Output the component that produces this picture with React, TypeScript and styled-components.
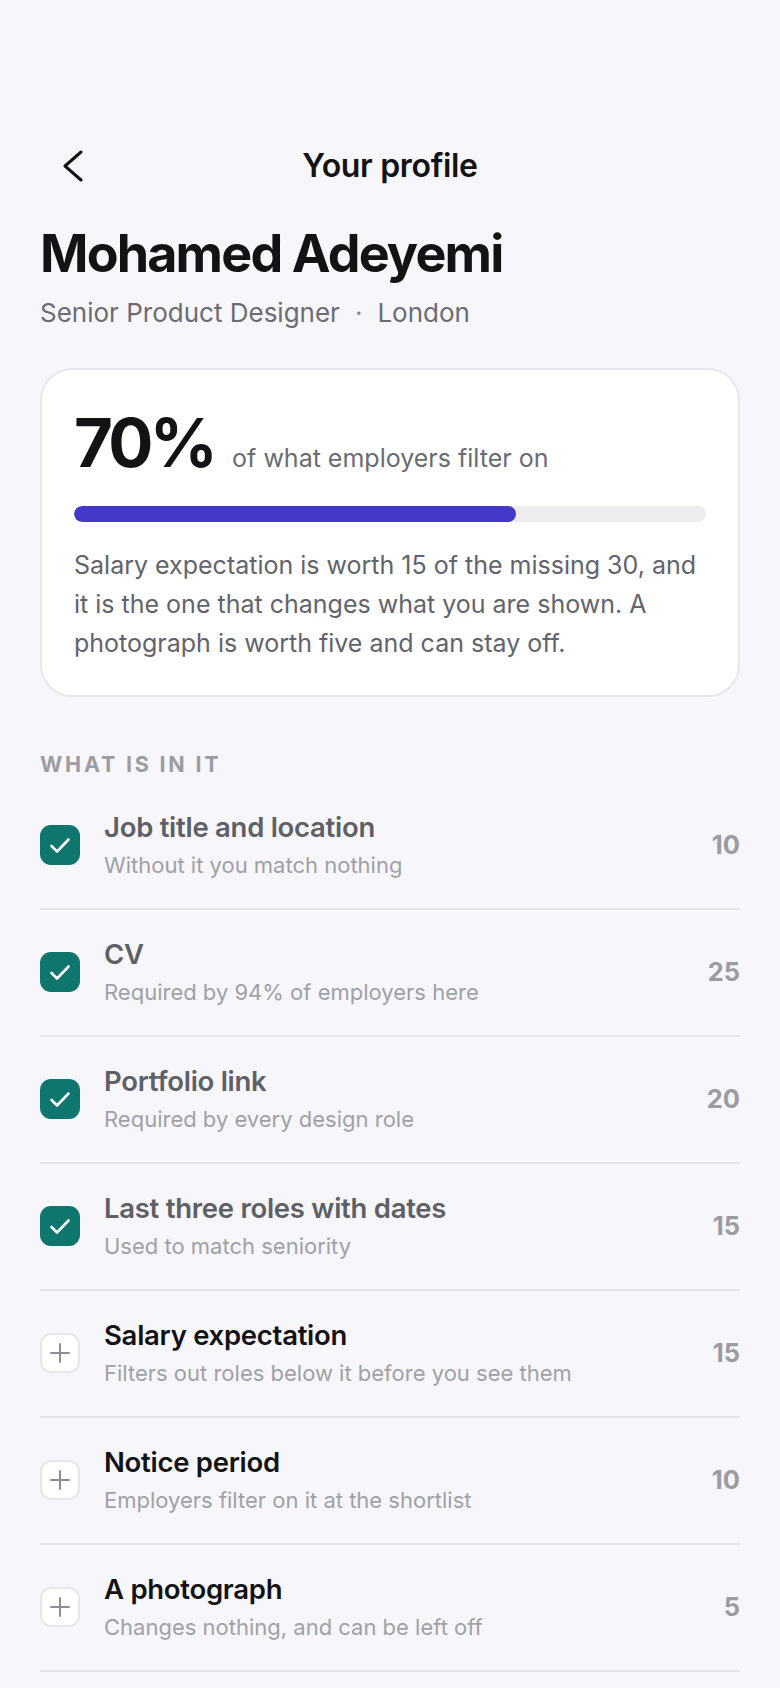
import React from "react";
import styled, { createGlobalStyle } from "styled-components";

const GlobalStyle = createGlobalStyle`
  html, body {
    margin: 0;
    padding: 0;
    background: #f7f7fb;
  }
  body {
    font-family: Inter, "Noto Sans", "Liberation Sans", sans-serif;
    color: #131316;
    -webkit-font-smoothing: antialiased;
  }
  * { box-sizing: border-box; }
`;

const Page = styled.main`
  width: 780px;
  min-height: 1688px;
  padding: 122px 40px 0;
  background: #f7f7fb;
`;

const Header = styled.header`
  position: relative;
  height: 88px;
  display: flex;
  align-items: center;
  justify-content: center;
`;

const BackButton = styled.button`
  position: absolute;
  left: 14px;
  top: 50%;
  transform: translateY(-50%);
  width: 40px;
  height: 44px;
  border: 0;
  padding: 0;
  background: transparent;
  display: flex;
  align-items: center;
  justify-content: center;
  cursor: pointer;
`;

const HeaderTitle = styled.h1`
  margin: 0;
  font-size: 32px;
  line-height: 40px;
  font-weight: 600;
  letter-spacing: -0.01em;
  color: #131316;
`;

const Name = styled.h2`
  margin: 13px 0 0;
  font-size: 52px;
  line-height: 62px;
  font-weight: 700;
  letter-spacing: -0.035em;
  color: #131316;
`;

const Meta = styled.p`
  margin: 8px 0 0;
  font-size: 26px;
  line-height: 39px;
  color: #6b6b73;
  display: flex;
  align-items: center;
  gap: 15px;
`;

const Dot = styled.span`
  color: #8a8a92;
`;

const Card = styled.section`
  margin-top: 36px;
  background: #ffffff;
  border: 2px solid #e7e7ec;
  border-radius: 32px;
  padding: 32px;
`;

const ScoreRow = styled.div`
  display: flex;
  align-items: baseline;
  gap: 18px;
`;

const Score = styled.span`
  font-size: 67px;
  line-height: 82px;
  font-weight: 700;
  letter-spacing: -0.055em;
  color: #131316;
`;

const ScoreCaption = styled.span`
  font-size: 25px;
  line-height: 34px;
  color: #6b6b73;
`;

const Track = styled.div`
  margin-top: 22px;
  height: 16px;
  border-radius: 8px;
  background: #ededf0;
  overflow: hidden;
`;

const Fill = styled.div`
  height: 100%;
  border-radius: 8px;
  background: #4338ca;
`;

const Note = styled.p`
  margin: 24px 0 0;
  font-size: 25px;
  line-height: 39px;
  color: #63636b;
`;

const SectionLabel = styled.h3`
  margin: 53px 0 5px;
  font-size: 21.5px;
  line-height: 28px;
  font-weight: 700;
  letter-spacing: 0.13em;
  text-transform: uppercase;
  color: #9c9ca3;
`;

const List = styled.ul`
  list-style: none;
  margin: 0;
  padding: 0;
`;

const Row = styled.li`
  display: flex;
  align-items: center;
  gap: 24px;
  padding: 26px 0 27px;
  border-bottom: 2px solid #e3e3e8;
`;

const Box = styled.span<{ $done: boolean }>`
  flex: 0 0 auto;
  width: 40px;
  height: 40px;
  border-radius: 11px;
  display: flex;
  align-items: center;
  justify-content: center;
  background: ${(p) => (p.$done ? "#0f766e" : "#ffffff")};
  border: ${(p) => (p.$done ? "0" : "2px solid #e6e6eb")};
`;

const Texts = styled.div`
  flex: 1 1 auto;
  display: flex;
  flex-direction: column;
  gap: 4px;
`;

const ItemTitle = styled.span<{ $done: boolean }>`
  font-size: 27.5px;
  line-height: 36px;
  font-weight: 600;
  letter-spacing: -0.01em;
  color: ${(p) => (p.$done ? "#5f5f66" : "#131316")};
`;

const ItemHint = styled.span`
  font-size: 22px;
  line-height: 32px;
  color: #a0a0a7;
`;

const Points = styled.span`
  flex: 0 0 auto;
  font-size: 25.5px;
  line-height: 32px;
  font-weight: 700;
  color: #9b9ba2;
`;

type Item = { title: string; hint: string; points: number; done: boolean };

const items: Item[] = [
  { title: "Job title and location", hint: "Without it you match nothing", points: 10, done: true },
  { title: "CV", hint: "Required by 94% of employers here", points: 25, done: true },
  { title: "Portfolio link", hint: "Required by every design role", points: 20, done: true },
  { title: "Last three roles with dates", hint: "Used to match seniority", points: 15, done: true },
  { title: "Salary expectation", hint: "Filters out roles below it before you see them", points: 15, done: false },
  { title: "Notice period", hint: "Employers filter on it at the shortlist", points: 10, done: false },
  { title: "A photograph", hint: "Changes nothing, and can be left off", points: 5, done: false },
];

const ChevronLeft = () => (
  <svg width="24" height="32" viewBox="0 0 24 32" fill="none" aria-hidden="true">
    <polyline
      points="19,2 3,16 19,30"
      stroke="#131316"
      strokeWidth="3"
      strokeLinecap="round"
      strokeLinejoin="round"
    />
  </svg>
);

const CheckIcon = () => (
  <svg width="40" height="40" viewBox="0 0 40 40" fill="none" aria-hidden="true">
    <polyline
      points="11.5,21 17,26.5 28.5,14.5"
      stroke="#ffffff"
      strokeWidth="2.6"
      strokeLinecap="round"
      strokeLinejoin="round"
    />
  </svg>
);

const PlusIcon = () => (
  <svg width="24" height="24" viewBox="0 0 24 24" fill="none" aria-hidden="true">
    <path d="M12 3v18M3 12h18" stroke="#8e8e95" strokeWidth="2" strokeLinecap="round" />
  </svg>
);

export default function App() {
  const score = 70;
  return (
    <>
      <GlobalStyle />
      <Page>
        <Header>
          <BackButton aria-label="Back">
            <ChevronLeft />
          </BackButton>
          <HeaderTitle>Your profile</HeaderTitle>
        </Header>

        <Name>Mohamed Adeyemi</Name>
        <Meta>
          <span>Senior Product Designer</span>
          <Dot>·</Dot>
          <span>London</span>
        </Meta>

        <Card>
          <ScoreRow>
            <Score>{score}%</Score>
            <ScoreCaption>of what employers filter on</ScoreCaption>
          </ScoreRow>
          <Track>
            <Fill style={{ width: `${score}%` }} />
          </Track>
          <Note>
            Salary expectation is worth 15 of the missing 30, and it is the one that changes what
            you are shown. A photograph is worth five and can stay off.
          </Note>
        </Card>

        <SectionLabel>What is in it</SectionLabel>
        <List>
          {items.map((it) => (
            <Row key={it.title}>
              <Box $done={it.done}>{it.done ? <CheckIcon /> : <PlusIcon />}</Box>
              <Texts>
                <ItemTitle $done={it.done}>{it.title}</ItemTitle>
                <ItemHint>{it.hint}</ItemHint>
              </Texts>
              <Points>{it.points}</Points>
            </Row>
          ))}
        </List>
      </Page>
    </>
  );
}
